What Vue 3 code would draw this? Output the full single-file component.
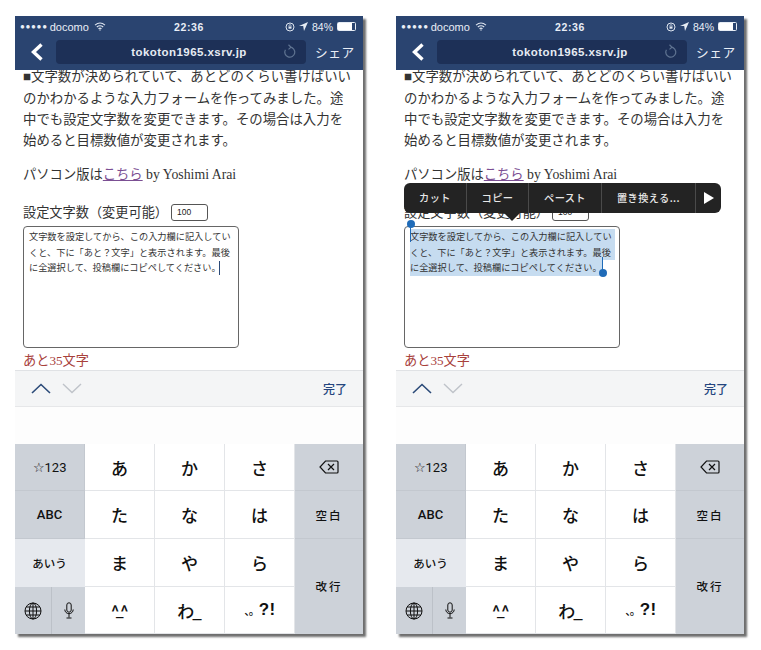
<script setup>
const phones = [
  { id: 1, selected: false },
  { id: 2, selected: true }
]
const bodyLines = [
  'のかわかるような入力フォームを作ってみました。途',
  '中でも設定文字数を変更できます。その場合は入力を',
  '始めると目標数値が変更されます。'
]
const areaLines = [
  '文字数を設定してから、この入力欄に記入してい',
  'くと、下に「あと？文字」と表示されます。最後',
  'に全選択して、投稿欄にコピペしてください。'
]
const menu = [
  { label: 'カット', w: 63 },
  { label: 'コピー', w: 62 },
  { label: 'ペースト', w: 73 },
  { label: '置き換える...', w: 94 }
]
const kana = ['あ', 'か', 'さ', 'た', 'な', 'は', 'ま', 'や', 'ら']
</script>

<template>
  <div class="page">
    <div v-for="p in phones" :key="p.id" class="phone">
      <header class="head">
        <div class="status">
          <div class="st-left">
            <span class="dots">●●●●●</span>
            <span>docomo</span>
            <svg width="12" height="9" viewBox="0 0 12 9" fill="none" stroke="#dfe6f0" stroke-width="1.1">
              <path d="M1 3.2C4 .6 8 .6 11 3.2M2.8 5C4.8 3.4 7.2 3.4 9.2 5M4.5 6.7C5.5 6 6.5 6 7.5 6.7" />
              <circle cx="6" cy="8" r=".7" fill="#dfe6f0" stroke="none" />
            </svg>
          </div>
          <div class="st-time">22:36</div>
          <div class="st-right">
            <svg width="10" height="10" viewBox="0 0 10 10" fill="none" stroke="#dfe6f0" stroke-width="1">
              <circle cx="5" cy="5" r="4" />
              <rect x="3.5" y="4.5" width="3" height="2.2" fill="#dfe6f0" stroke="none" />
              <path d="M4 4.5V3.6a1 1 0 0 1 2 0v.9" stroke-width=".7" />
            </svg>
            <svg width="9" height="9" viewBox="0 0 9 9"><path d="M9 0 0 4h4.2L5 9z" fill="#e6ecf4" /></svg>
            <span class="pct">84%</span>
            <span class="batt"><span class="batt-fill"></span></span>
          </div>
        </div>
        <div class="nav">
          <svg class="back" width="14" height="18" viewBox="0 0 14 18" fill="none" stroke="#fff" stroke-width="3.4">
            <path d="M11.5 1.5 3.5 9l8 7.5" />
          </svg>
          <div class="addr">
            <span class="url">tokoton1965.xsrv.jp</span>
            <svg class="reload" width="13" height="15" viewBox="0 0 13 15" fill="none" stroke="#5f7391" stroke-width="1.2">
              <path d="M7 3.2a5 5 0 1 1-4.6 2.6" />
              <path d="M5.5 .8 8 3.2 5.5 5.4" />
            </svg>
          </div>
          <span class="share">シェア</span>
        </div>
      </header>

      <main class="content">
        <p class="body-text">
          <span class="line"><span class="square">■</span>文字数が決められていて、あとどのくらい書けばいい</span>
          <span v-for="l in bodyLines" :key="l" class="line">{{ l }}</span>
        </p>
        <p class="pc">パソコン版は<a class="link">こちら</a><span class="serif"> by Yoshimi Arai</span></p>
        <div class="limit">
          <span>設定文字数（変更可能）</span>
          <span class="limit-input">100</span>
        </div>
        <div class="area">
          <div
            v-for="(l, i) in areaLines"
            :key="l"
            class="area-line"
            :class="{ sel: p.selected, last: i === 2 }"
          >{{ l }}<i v-if="!p.selected && i === 2" class="caret"></i></div>
          <template v-if="p.selected">
            <i class="h-start"></i>
            <i class="h-end"></i>
          </template>
        </div>
        <div class="remain">あと<span class="serif">35</span>文字</div>

        <div v-if="p.selected" class="menu">
          <span v-for="m in menu" :key="m.label" class="menu-item" :style="{ width: m.w + 'px' }">{{ m.label }}</span>
          <span class="menu-more"><svg width="10" height="12" viewBox="0 0 10 12"><path d="M0 0l10 6-10 6z" fill="#fff" /></svg></span>
          <i class="menu-tip"></i>
        </div>
      </main>

      <div class="accessory">
        <svg width="20" height="11" viewBox="0 0 20 11" fill="none" stroke="#2b4a78" stroke-width="1.6"><path d="M1 10 10 1.5 19 10" /></svg>
        <svg class="down" width="20" height="11" viewBox="0 0 20 11" fill="none" stroke="#bfc3c9" stroke-width="1.4"><path d="M1 1l9 8.5L19 1" /></svg>
        <span class="done">完了</span>
      </div>
      <div class="strip"></div>

      <div class="keys">
        <div class="key gray thin">☆123</div>
        <div v-for="k in kana.slice(0, 3)" :key="k" class="key kana">{{ k }}</div>
        <div class="key gray nr">
          <svg width="20" height="14" viewBox="0 0 20 14" fill="none" stroke="#111" stroke-width="1.2">
            <path d="M6.5 1H18a1 1 0 0 1 1 1v10a1 1 0 0 1-1 1H6.5L1 7z" />
            <path d="M9 4l6 6M15 4l-6 6" />
          </svg>
        </div>
        <div class="key gray">ABC</div>
        <div v-for="k in kana.slice(3, 6)" :key="k" class="key kana">{{ k }}</div>
        <div class="key gray nr jp">空白</div>
        <div class="key light">あいう</div>
        <div v-for="k in kana.slice(6, 9)" :key="k" class="key kana">{{ k }}</div>
        <div class="key gray nr ret jp">改行</div>
        <div class="key gray split">
          <span class="half">
            <svg width="18" height="18" viewBox="0 0 18 18" fill="none" stroke="#111" stroke-width="1">
              <circle cx="9" cy="9" r="8" />
              <ellipse cx="9" cy="9" rx="3.6" ry="8" />
              <path d="M9 1v16M1 9h16M2.2 5h13.6M2.2 13h13.6" />
            </svg>
          </span>
          <span class="half">
            <svg width="10" height="17" viewBox="0 0 10 17" fill="none" stroke="#111" stroke-width="1">
              <rect x="2.8" y=".8" width="4.4" height="9.4" rx="2.2" />
              <path d="M.8 7.5a4.2 4.2 0 0 0 8.4 0M5 12v3.5M2.5 16h5" />
            </svg>
          </span>
        </div>
        <div class="key kana face">^_^</div>
        <div class="key kana wa">わ_</div>
        <div class="key kana punct"><span class="pn">、。</span>?!</div>
      </div>
    </div>
  </div>
</template>

<style scoped>
.page {
  width: 761px;
  height: 650px;
  box-sizing: border-box;
  padding: 16px 0 0 15px;
  display: flex;
  gap: 33px;
  background: #fff;
  font-family: "Noto Sans CJK JP", "Liberation Sans", sans-serif;
  color: #2a2a2a;
  overflow: hidden;
}
.phone {
  position: relative;
  width: 348px;
  height: 618px;
  display: flex;
  flex-direction: column;
  background: #fff;
  box-shadow: 3px 3px 2px #6e6e6e;
}
.head {
  position: relative;
  z-index: 2;
  height: 54px;
  flex: none;
  background: #2a4470;
  color: #e9eef6;
}
.status {
  height: 21px;
  padding: 0 5px;
  display: flex;
  align-items: center;
  justify-content: space-between;
  font-family: "Liberation Sans", sans-serif;
  font-size: 11px;
  position: relative;
}
.st-left, .st-right { display: flex; align-items: center; gap: 2px; }
.dots { font-size: 8px; letter-spacing: 0.7px; }
.st-left svg { margin-left: 3px; }
.st-time {
  position: absolute;
  left: 0;
  right: 0;
  text-align: center;
  font-weight: 700;
  font-size: 10.5px;
  letter-spacing: 0.6px;
}
.st-right { gap: 4px; }
.pct { font-size: 10.5px; }
.batt {
  width: 17px;
  height: 7px;
  border: 1px solid #e6ecf4;
  border-radius: 1.5px;
  display: block;
  padding: 0;
  margin-right: 2px;
}
.batt-fill { display: block; width: 84%; height: 100%; background: #fff; }
.nav {
  height: 33px;
  display: flex;
  align-items: flex-start;
  padding-top: 3px;
  box-sizing: border-box;
}
.back { margin: 3px 0 0 15px; flex: none; }
.addr {
  width: 250px;
  height: 24px;
  margin-left: 12px;
  background: #1d3057;
  border-radius: 4px;
  display: flex;
  align-items: center;
  justify-content: center;
  position: relative;
  flex: none;
}
.url {
  font-family: "Liberation Sans", sans-serif;
  font-weight: 700;
  font-size: 11.5px;
  letter-spacing: 0.45px;
  color: #e6ebf3;
  margin-left: 16px;
}
.reload { position: absolute; right: 10px; top: 4px; }
.share {
  margin-left: 9px;
  font-size: 12.7px;
  line-height: 24px;
  letter-spacing: 0.6px;
  white-space: nowrap;
}
.content {
  position: relative;
  flex: none;
  height: 300px;
  padding-left: 8px;
  overflow: hidden;
}
.body-text { margin: -5px 0 0; font-size: 13.4px; line-height: 21px; color: #333; }
.line { display: block; white-space: nowrap; }
.square { font-family: "Liberation Sans", sans-serif; }
.pc { margin: 13px 0 0; font-size: 13.3px; line-height: 21px; color: #333; white-space: nowrap; }
.pc .serif { font-size: 13.8px; }
.link { color: #7b4f93; text-decoration: underline; }
.serif { font-family: "Liberation Serif", serif; }
.limit {
  margin-top: 17px;
  display: flex;
  align-items: center;
  font-size: 13.2px;
  line-height: 18px;
  color: #333;
  white-space: nowrap;
}
.limit-input {
  width: 37px;
  height: 17px;
  box-sizing: border-box;
  margin-left: 3px;
  margin-top: 2px;
  border: 1px solid #555;
  border-radius: 3px;
  padding-left: 5px;
  font: 8.5px/15px "Liberation Sans", sans-serif;
  color: #222;
}
.area {
  position: relative;
  box-sizing: border-box;
  width: 216px;
  height: 122px;
  margin-top: 5px;
  padding: 2px 5px;
  border: 1px solid #666;
  border-radius: 4px;
  background: #fff;
}
.area-line {
  font-size: 9.2px;
  line-height: 15.5px;
  color: #333;
  white-space: nowrap;
  height: 15.5px;
  position: relative;
}
.sel { background: #c6dcf0; margin-right: -1px; }
.sel.last { width: 192px; }
.caret {
  position: absolute;
  left: 190px;
  top: 1px;
  width: 1px;
  height: 14px;
  background: #2b4a78;
}
.h-start {
  position: absolute;
  left: 5px;
  top: -3px;
  width: 1px;
  height: 18px;
  background: #1f6bb8;
}
.h-start::before, .h-end::after {
  content: "";
  position: absolute;
  width: 8px;
  height: 8px;
  border-radius: 50%;
  background: #1f6bb8;
  left: -3.5px;
}
.h-start::before { top: -4px; }
.h-end {
  position: absolute;
  left: 197px;
  top: 30px;
  width: 1px;
  height: 16px;
  background: #1f6bb8;
}
.h-end::after { bottom: -4px; }
.remain {
  margin-top: 2px;
  font-size: 13.2px;
  line-height: 20px;
  color: #a8413c;
}
.menu {
  position: absolute;
  z-index: 3;
  left: 8px;
  top: 113px;
  width: 317px;
  height: 30px;
  display: flex;
  background: #232323;
  border-radius: 6px;
}
.menu-item {
  flex: none;
  box-sizing: border-box;
  border-right: 1px solid #4a4a4a;
  text-align: center;
  font-size: 10.2px;
  font-weight: 500;
  line-height: 30px;
  color: #e8e8e8;
  letter-spacing: 0.4px;
  white-space: nowrap;
}
.menu-more { flex: 1; display: flex; align-items: center; justify-content: center; }
.menu-tip {
  position: absolute;
  left: 100px;
  bottom: -8px;
  width: 0;
  height: 0;
  border-left: 8px solid transparent;
  border-right: 8px solid transparent;
  border-top: 8px solid #232323;
}
.accessory {
  height: 37px;
  flex: none;
  box-sizing: border-box;
  border-top: 1px solid #e0e2e5;
  border-bottom: 1px solid #e6e7e9;
  background: #f4f5f6;
  display: flex;
  align-items: center;
  padding: 0 16px;
  position: relative;
  z-index: 1;
}
.accessory svg { margin-top: -1px; }
.down { margin-left: 11px; }
.done {
  margin-left: auto;
  font-size: 12px;
  font-weight: 500;
  color: #24457e;
}
.strip { height: 37px; flex: none; background: #fdfdfd; }
.keys {
  flex: 1;
  display: grid;
  grid-template-columns: 70px 70px 70px 70px 68px;
  grid-template-rows: 47px 48px 48px 47px;
  background: #fff;
}
.key {
  box-sizing: border-box;
  display: flex;
  align-items: center;
  justify-content: center;
  border-right: 1px solid #e3e5e8;
  border-bottom: 1px solid #e3e5e8;
  color: #111;
  white-space: nowrap;
}
.gray {
  background: #cdd2d9;
  border-color: #c3c8cf;
  font-family: Roboto, "Liberation Sans", sans-serif;
  font-size: 13px;
  font-weight: 500;
}
.thin { font-weight: 400; }
.light { background: #e6e9ee; font-size: 11.5px; border-color: #e6e9ee; font-weight: 500; }
.kana { font-size: 17px; font-weight: 500; }
.face { font-size: 14px; font-weight: 700; letter-spacing: -3.5px; padding-right: 3px; }
.wa { letter-spacing: -2px; font-size: 17px; padding-right: 2px; }
.punct { font-family: "Liberation Sans", sans-serif; font-size: 17px; font-weight: 700; letter-spacing: 0.5px; padding-left: 1px; }
.pn { font-family: "Noto Sans CJK JP", sans-serif; font-size: 11px; font-weight: 500; letter-spacing: -1px; margin-right: 0; align-self: center; line-height: 1; padding-top: 1px; }
.nr { border-right: none; }
.jp { font-family: "Noto Sans CJK JP", sans-serif; font-size: 11.5px; letter-spacing: 2px; font-weight: 500; }
.ret { grid-column: 5; grid-row: 3 / span 2; border-bottom: none; padding-bottom: 2px; }
.split { padding: 0; border: none; }
.half {
  flex: 1;
  height: 100%;
  display: flex;
  align-items: center;
  justify-content: center;
}
.half:first-child { flex: none; width: 36px; border-right: 1px solid #bcc1c8; }
</style>
